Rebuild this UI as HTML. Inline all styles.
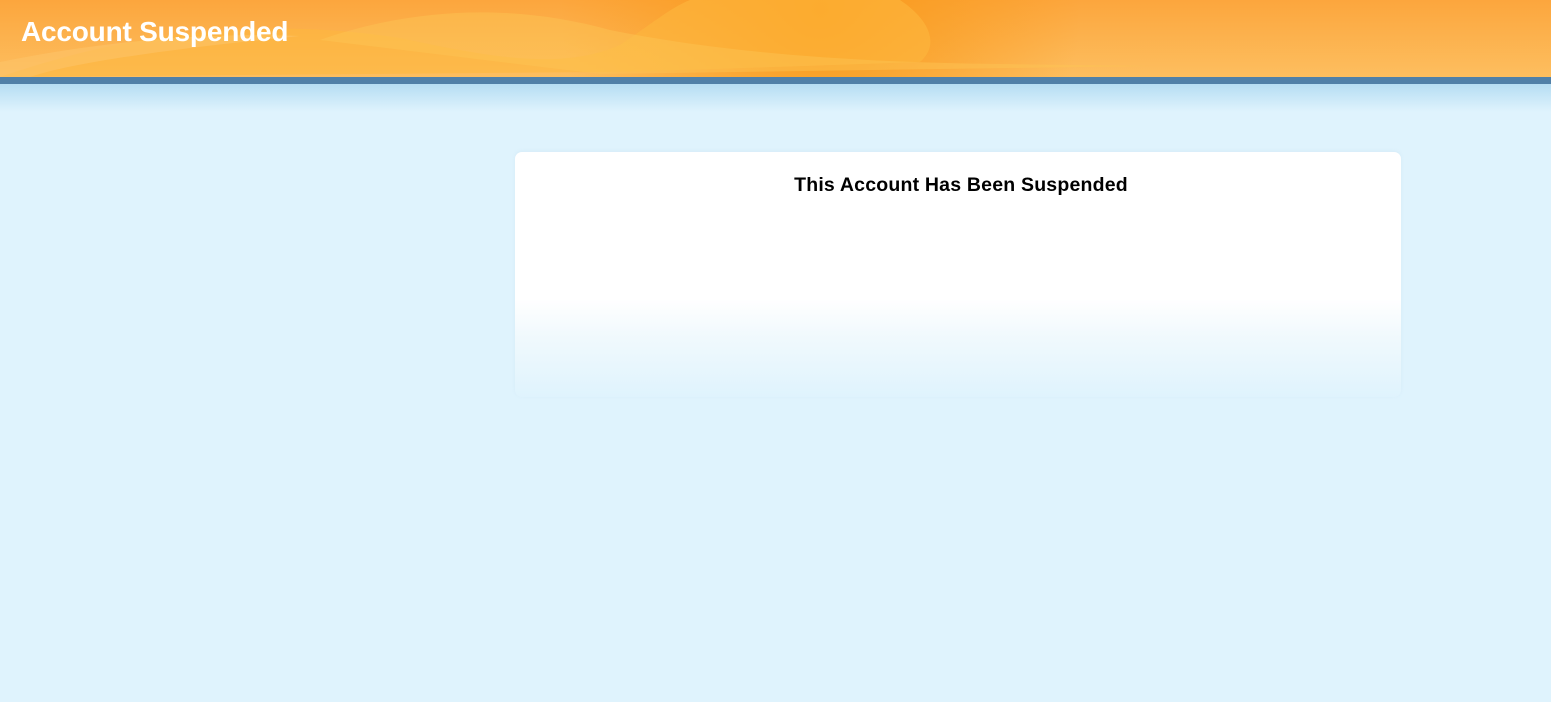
<!DOCTYPE html>
<html><head><meta charset="utf-8"><style>
html,body{margin:0;padding:0;width:1551px;height:702px;overflow:hidden;background:#dff3fd;font-family:"Liberation Sans",Arial,sans-serif}
#hdr{position:absolute;left:0;top:0;width:1551px;height:77px;background:linear-gradient(#fca63d,#fdbe5f)}
#hdr svg{position:absolute;left:0;top:0}
#title{position:absolute;left:21px;top:16px;color:#fff;font-weight:bold;font-size:28px;letter-spacing:-0.2px}
#bar{position:absolute;left:0;top:77px;width:1551px;height:7px;background:#5080a8}
#fade{position:absolute;left:0;top:84px;width:1551px;height:28px;background:linear-gradient(#b5ddf3,#dff3fd)}
#card{position:absolute;left:515px;top:152px;width:886px;height:245px;border-radius:7px;background:linear-gradient(#fff 0,#fff 60%,#f0f9fd 76%,#dff3fd 100%);box-shadow:0 -1px 3px rgba(200,225,240,0.4)}
#card h1{margin:0;position:absolute;top:22px;left:0;width:100%;text-align:center;font-size:19.5px;font-weight:bold;color:#000;letter-spacing:0.2px;padding-left:6px;box-sizing:border-box}
</style></head><body>
<div id="hdr">
<svg width="1551" height="77" viewBox="0 0 1551 77">
<defs>
<radialGradient id="g1" cx="820" cy="10" r="260" gradientUnits="userSpaceOnUse"><stop offset="0" stop-color="#f99a1a"/><stop offset="1" stop-color="#f99a1a" stop-opacity="0"/></radialGradient>
</defs>
<rect x="500" y="0" width="700" height="77" fill="url(#g1)"/>
<path d="M0 77 C150 25 280 20 400 38 C480 55 560 72 620 45 C650 25 670 8 690 0 L900 0 C930 20 940 45 920 62 C800 66 700 70 600 72 L0 77Z" fill="#fdb73d" opacity="0.6"/>
<path d="M320 40 C420 5 520 5 610 30 C700 48 820 62 1000 64 L1150 66 L600 74 Z" fill="#fcc555" opacity="0.45"/>
<path d="M0 77 L0 62 C100 42 200 32 300 36 C200 46 80 60 30 77Z" fill="#fdc56a" opacity="0.55"/>
</svg>
<div id="title">Account Suspended</div>
</div>
<div id="bar"></div>
<div id="fade"></div>
<div id="card"><h1>This Account Has Been Suspended</h1></div>
</body></html>
